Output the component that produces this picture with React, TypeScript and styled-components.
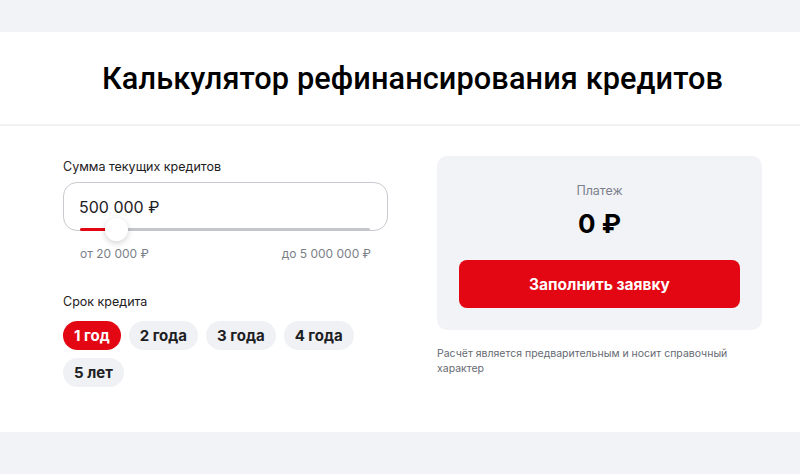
import React from "react";
import styled, { createGlobalStyle } from "styled-components";

const GlobalStyle = createGlobalStyle`
  html, body {
    margin: 0;
    padding: 0;
    background: #f2f3f7;
  }
  body {
    font-family: Inter, "Noto Sans", sans-serif;
    color: #1d2023;
  }
  * {
    box-sizing: border-box;
  }
`;

const Page = styled.div({
  paddingTop: "32px",
  paddingBottom: "42px",
  background: "#f2f3f7",
});

const Section = styled.div({
  background: "#ffffff",
});

const Header = styled.div({
  height: "94px",
  display: "flex",
  alignItems: "center",
  justifyContent: "center",
  paddingLeft: "25px",
  borderBottom: "2px solid #f0f1f3",
});

const Title = styled.h1({
  margin: 0,
  fontFamily: "Roboto, sans-serif",
  fontWeight: 500,
  fontSize: "30.7px",
  letterSpacing: "0.1px",
  color: "#000",
});

const Body = styled.div({
  display: "grid",
  gridTemplateColumns: "325px 325px",
  columnGap: "49px",
  padding: "30px 0 45px 63px",
});

const Column = styled.div({
  display: "flex",
  flexDirection: "column",
});

const Label = styled.div({
  fontSize: "12.5px",
  lineHeight: "16px",
  color: "#1d2023",
  marginTop: "3px",
});

const InputBox = styled.div({
  position: "relative",
  marginTop: "7px",
  height: "49px",
  border: "1px solid #c8cacf",
  borderRadius: "14px",
  padding: "0 15px",
  display: "flex",
  alignItems: "center",
  fontSize: "16px",
  color: "#1d2023",
});

const Track = styled.div({
  position: "absolute",
  left: "16px",
  right: "17px",
  bottom: "-1px",
  height: "3px",
  background: "#c4c6cc",
  borderRadius: "2px",
});

const Fill = styled.div({
  position: "absolute",
  left: 0,
  top: 0,
  bottom: 0,
  background: "#e30613",
  borderRadius: "2px",
});

const Thumb = styled.div({
  position: "absolute",
  top: "-10px",
  width: "23px",
  height: "23px",
  marginLeft: "-11px",
  borderRadius: "50%",
  background: "#fff",
  boxShadow: "0 2px 6px rgba(0, 0, 0, 0.18)",
});

const Limits = styled.div({
  display: "flex",
  justifyContent: "space-between",
  padding: "0 17px 0 17px",
  marginTop: "15px",
  fontSize: "12px",
  color: "#7b7f87",
});

const TermLabel = styled(Label)({
  marginTop: "33px",
});

const Chips = styled.div({
  display: "flex",
  flexWrap: "wrap",
  gap: "8px",
  marginTop: "11px",
  width: "300px",
});

const Chip = styled.button<{ $active?: boolean }>((p) => ({
  height: "29px",
  padding: "0 11px",
  border: "none",
  borderRadius: "15px",
  fontFamily: "Inter, sans-serif",
  fontWeight: 700,
  fontSize: "15px",
  background: p.$active ? "#e30613" : "#f0f1f5",
  color: p.$active ? "#fff" : "#1d2023",
  cursor: "pointer",
}));

const Card = styled.div({
  background: "#f2f3f7",
  borderRadius: "10px",
  padding: "27px 22px 22px",
  display: "flex",
  flexDirection: "column",
  alignItems: "center",
});

const PayLabel = styled.div({
  fontSize: "12.5px",
  color: "#7b808b",
});

const PayValue = styled.div({
  marginTop: "10px",
  fontSize: "26px",
  fontWeight: 700,
  color: "#000",
});

const Submit = styled.button({
  marginTop: "21px",
  width: "100%",
  height: "48px",
  border: "none",
  borderRadius: "8px",
  background: "#e30613",
  color: "#fff",
  fontFamily: "Inter, sans-serif",
  fontWeight: 700,
  fontSize: "15.5px",
  cursor: "pointer",
});

const Note = styled.div({
  marginTop: "16px",
  fontSize: "10.5px",
  lineHeight: "15px",
  color: "#666a72",
  width: "300px",
});

const terms = ["1 год", "2 года", "3 года", "4 года", "5 лет"];

const App = () => {
  const [term, setTerm] = React.useState(0);
  const percent = 12.4;

  return (
    <>
      <GlobalStyle />
      <Page>
        <Section>
          <Header>
            <Title>Калькулятор рефинансирования кредитов</Title>
          </Header>
          <Body>
            <Column>
              <Label>Сумма текущих кредитов</Label>
              <InputBox>
                500 000 ₽
                <Track>
                  <Fill style={{ width: `${percent}%` }} />
                  <Thumb style={{ left: `${percent}%` }} />
                </Track>
              </InputBox>
              <Limits>
                <span>от 20 000 ₽</span>
                <span>до 5 000 000 ₽</span>
              </Limits>
              <TermLabel>Срок кредита</TermLabel>
              <Chips>
                {terms.map((t, i) => (
                  <Chip key={t} $active={i === term} onClick={() => setTerm(i)}>
                    {t}
                  </Chip>
                ))}
              </Chips>
            </Column>
            <Column>
              <Card>
                <PayLabel>Платеж</PayLabel>
                <PayValue>0 ₽</PayValue>
                <Submit>Заполнить заявку</Submit>
              </Card>
              <Note>
                Расчёт является предварительным и носит справочный характер
              </Note>
            </Column>
          </Body>
        </Section>
      </Page>
    </>
  );
};

export default App;
